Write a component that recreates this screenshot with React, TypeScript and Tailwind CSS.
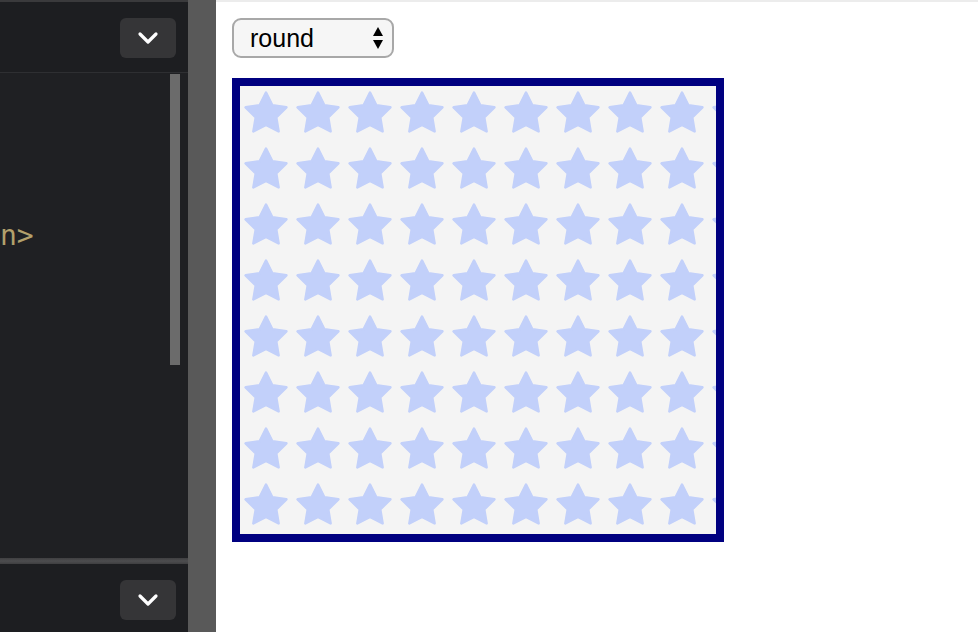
import React from "react";

function Chevron() {
  return (
    <svg width="22" height="14" viewBox="0 0 22 14" fill="none">
      <path d="M3 3 L11 11 L19 3" stroke="#ffffff" strokeWidth="3.2" strokeLinecap="round" strokeLinejoin="round" />
    </svg>
  );
}

function DarkButton() {
  return (
    <div className="w-[56px] h-[40px] rounded-[6px] bg-[#353537] flex items-center justify-center">
      <Chevron />
    </div>
  );
}

function StarBox() {
  return (
    <div className="w-[492px] h-[464px] border-[8px] border-[#000080] bg-[#f4f4f4]">
      <svg width="476" height="448" className="block">
        <defs>
          <filter id="soft" x="-10%" y="-10%" width="120%" height="120%">
            <feGaussianBlur stdDeviation="0.6" />
          </filter>
          <pattern id="stars" x="0" y="0" width="52" height="56" patternUnits="userSpaceOnUse">
            <polygon
              filter="url(#soft)"
              fill="#c2d0fa"
              stroke="#c2d0fa"
              strokeWidth="2.5"
              strokeLinejoin="round"
              points="26,6.5 32.35,19.26 46.45,21.36 36.27,31.34 38.64,45.39 26,38.8 13.36,45.39 15.73,31.34 5.55,21.36 19.65,19.26"
            />
          </pattern>
        </defs>
        <rect width="476" height="448" fill="url(#stars)" />
      </svg>
    </div>
  );
}

export default function App() {
  return (
    <div className="flex w-[978px] h-[632px] overflow-hidden" style={{ fontFamily: "'Liberation Sans', Arial, sans-serif" }}>
      <div className="w-[188px] flex flex-col bg-[#1f2023]">
        <div className="h-[2px] bg-[#3a3a3c]" />
        <div className="h-[70px] bg-[#1d1e21] flex items-start justify-end pt-[16px] pr-[12px]">
          <DarkButton />
        </div>
        <div className="h-[1px] bg-[#2e2f32]" />
        <div className="flex-1 flex">
          <div className="flex-1 relative overflow-hidden">
            <div
              className="pt-[148px] text-[28px] leading-[30px] text-[#b3a16c]"
              style={{ fontFamily: "'DejaVu Sans Mono', monospace" }}
            >
              n&gt;
            </div>
          </div>
          <div className="w-[10px] mr-[8px] pt-[1px]">
            <div className="h-[291px] bg-[#6b6b6b]" />
          </div>
        </div>
        <div className="h-[6px] bg-gradient-to-b from-[#3f3f41] via-[#4d4d4f] to-[#3f3f41]" />
        <div className="h-[68px] bg-[#1d1e21] flex items-start justify-end pt-[16px] pr-[12px]">
          <DarkButton />
        </div>
      </div>
      <div className="w-[28px] bg-[#595959]" />
      <div className="flex-1 flex flex-col bg-white">
        <div className="h-[2px] bg-[#ececec]" />
        <div className="pl-[16px] pt-[16px]">
          <div className="w-[162px] h-[40px] rounded-[9px] border-2 border-[#a8a8a8] bg-[#f6f6f6] flex items-center justify-between pl-[16px] pr-[8px]">
            <span className="text-[25px] text-black leading-none">round</span>
            <svg width="12" height="24" viewBox="0 0 12 24">
              <polygon points="6,1 11,10 1,10" fill="#000" />
              <polygon points="1,14 11,14 6,23" fill="#000" />
            </svg>
          </div>
        </div>
        <div className="pl-[16px] pt-[20px]">
          <StarBox />
        </div>
      </div>
    </div>
  );
}
